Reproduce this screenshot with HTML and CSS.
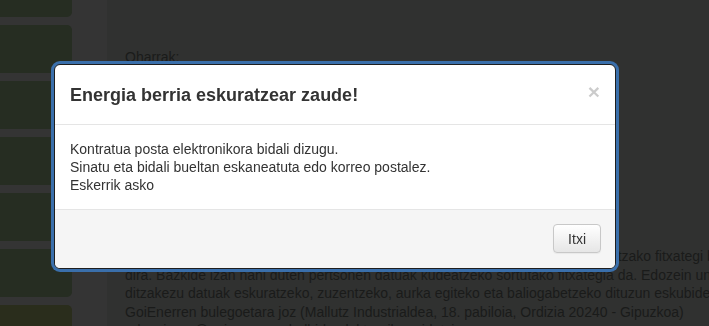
FILE: index.html
```html
<!DOCTYPE html>
<html lang="eu">
<head>
  <meta charset="UTF-8" />
  <meta name="viewport" content="width=device-width, initial-scale=1.0"/>
  <title>Kontratua - GoiEner</title>
  <link rel="stylesheet" href="styles.css">
</head>
<body>

  <div class="page">
    <aside class="sidebar">
      <div class="tile tile-first"></div>
      <div class="tile"></div>
      <div class="tile"></div>
      <div class="tile"></div>
      <div class="tile"></div>
      <div class="tile"></div>
      <div class="tile tile-olive"></div>
    </aside>

    <main class="content">
      <label class="notes-label" for="notes">Oharrak:</label>
      <textarea id="notes" class="notes"></textarea>
      <p class="legal">
        <span>Emandako zure datu pertsonal guztiak GoiEner Energia Koop. Elkartearen jabetzako fitxategi batean sartuko</span>
        <span>dira. Bazkide izan nahi duten pertsonen datuak kudeatzeko sortutako fitxategia da. Edozein unetan</span>
        <span>ditzakezu datuak eskuratzeko, zuzentzeko, aurka egiteko eta baliogabetzeko dituzun eskubideak</span>
        <span>GoiEnerren bulegoetara joz (Mallutz Industrialdea, 18. pabiloia, Ordizia 20240 - Gipuzkoa)</span>
        <span>edazpiener@goiener.com helbide elektronikora idatziz.</span>
      </p>
    </main>
  </div>

  <div class="modal">
    <div class="modal-content">
      <div class="modal-header">
        <button type="button" class="close">&times;</button>
        <h4 class="modal-title">Energia berria eskuratzear zaude!</h4>
      </div>
      <div class="modal-body">
        <p>Kontratua posta elektronikora bidali dizugu.</p>
        <p>Sinatu eta bidali bueltan eskaneatuta edo korreo postalez.</p>
        <p>Eskerrik asko</p>
      </div>
      <div class="modal-footer">
        <button type="button" class="btn">Itxi</button>
      </div>
    </div>
  </div>

</body>
</html>
```

FILE: styles.css
```css
* {
  margin: 0;
  padding: 0;
  box-sizing: border-box;
  font-family: 'Liberation Sans', Arial, sans-serif;
}

body {
  background-color: #303130;
  color: #1a1b1a;
  overflow: hidden;
  height: 326px;
}

.page {
  display: flex;
  height: 100%;
}

/* page under the backdrop, already dimmed */
.sidebar {
  width: 107px;
  flex-shrink: 0;
  background-color: #343434;
  display: flex;
  flex-direction: column;
  gap: 8px;
  margin-top: -31px;
}

.tile {
  width: 72px;
  height: 48px;
  flex-shrink: 0;
  background-color: #262d22;
  border-radius: 0 5px 5px 0;
}

.tile-olive {
  background-color: #2a2d1c;
}

.content {
  padding: 48px 0 0 18px;
  font-size: 14px;
}

.notes-label {
  display: block;
  line-height: 18px;
}

.notes {
  display: block;
  width: 420px;
  height: 170px;
  margin: 6px 0 0;
  border: 1px solid #2a2a2a;
  background-color: #333;
  resize: none;
}

.legal {
  margin-top: 5px;
  line-height: 18.5px;
  white-space: nowrap;
}

.legal span {
  display: block;
}

/* modal */
.modal {
  position: fixed;
  top: 64px;
  left: 54px;
}

.modal-content {
  width: 562px;
  background-color: white;
  border: 1px solid #1e1e1e;
  border-radius: 6px;
  box-shadow: 0 0 0 3px #3a6fab;
  color: #333;
}

.modal-header {
  padding: 16px 15px 15px;
  border-bottom: 1px solid #e5e5e5;
}

.modal-title {
  font-size: 18px;
  font-weight: bold;
  line-height: 28px;
}

.close {
  float: right;
  margin-top: 1px;
  background: none;
  border: none;
  font-size: 21px;
  font-weight: bold;
  line-height: 20px;
  color: #000;
  opacity: 0.2;
  cursor: pointer;
}

.modal-body {
  padding: 15px;
  font-size: 14px;
  line-height: 18px;
}

.modal-footer {
  display: flex;
  justify-content: flex-end;
  padding: 14px 14px 15px;
  background-color: #f5f5f5;
  border-top: 1px solid #e5e5e5;
  border-radius: 0 0 5px 5px;
}

.btn {
  height: 29px;
  padding: 0 14px;
  font-size: 14px;
  color: #333;
  background: linear-gradient(#ffffff, #e6e6e6);
  border: 1px solid #c8c8c8;
  border-radius: 4px;
  box-shadow: 0 1px 1px rgba(0, 0, 0, 0.05);
  cursor: pointer;
}
```
